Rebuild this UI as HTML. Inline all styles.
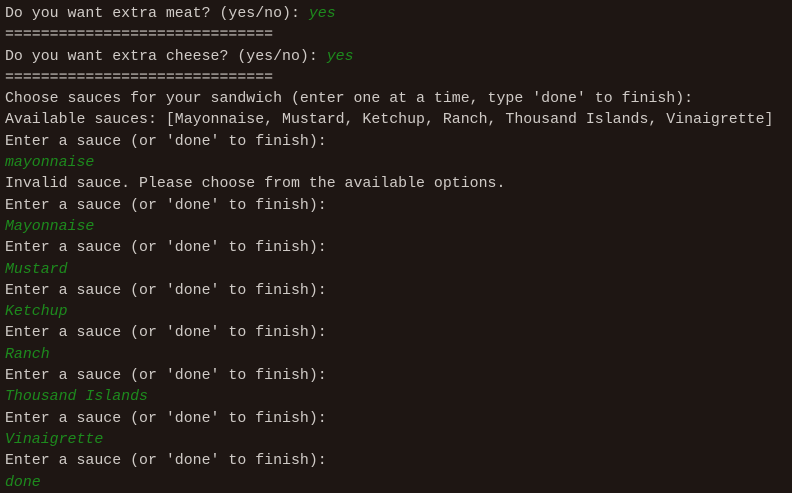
<!DOCTYPE html>
<html><head><style>
html,body{margin:0;padding:0;background:#1e1613;width:792px;height:493px;overflow:hidden}
pre{margin:0;padding:4px 0 0 5px;font-family:"Liberation Mono",monospace;font-size:14.9px;line-height:21.3px;color:#cfcac6}
i{color:#1d8a1d;font-style:italic}
</style></head><body><pre>Do you want extra meat? (yes/no): <i>yes</i>
==============================
Do you want extra cheese? (yes/no): <i>yes</i>
==============================
Choose sauces for your sandwich (enter one at a time, type 'done' to finish):
Available sauces: [Mayonnaise, Mustard, Ketchup, Ranch, Thousand Islands, Vinaigrette]
Enter a sauce (or 'done' to finish):
<i>mayonnaise</i>
Invalid sauce. Please choose from the available options.
Enter a sauce (or 'done' to finish):
<i>Mayonnaise</i>
Enter a sauce (or 'done' to finish):
<i>Mustard</i>
Enter a sauce (or 'done' to finish):
<i>Ketchup</i>
Enter a sauce (or 'done' to finish):
<i>Ranch</i>
Enter a sauce (or 'done' to finish):
<i>Thousand Islands</i>
Enter a sauce (or 'done' to finish):
<i>Vinaigrette</i>
Enter a sauce (or 'done' to finish):
<i>done</i></pre></body></html>
